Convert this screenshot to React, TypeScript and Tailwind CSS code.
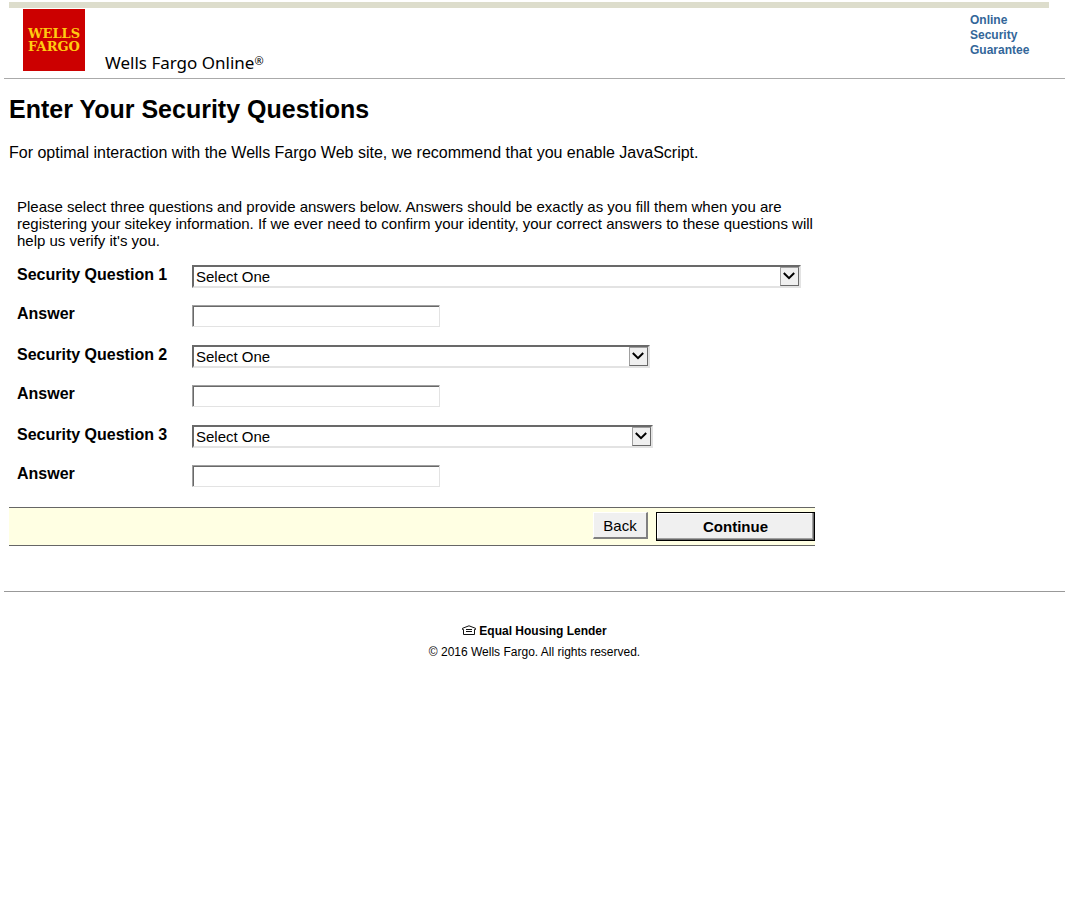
type Question = { id: string; label: string; width: string };

const questions: Question[] = [
  { id: "q1", label: "Security Question 1", width: "w-[609px]" },
  { id: "q2", label: "Security Question 2", width: "w-[458px]" },
  { id: "q3", label: "Security Question 3", width: "w-[461px]" },
];

function Logo() {
  return (
    <div className="flex size-[62px] flex-col items-center justify-center bg-[#cc0000] text-center font-['DejaVu_Serif',serif] text-[13px] font-bold leading-[13px] text-[#ffcc11]">
      <span>WELLS</span>
      <span>FARGO</span>
    </div>
  );
}

function HouseIcon() {
  return (
    <svg width="14" height="12" viewBox="0 0 14 12" fill="none" stroke="#111" aria-hidden="true">
      <path d="M0.5 4.5V3.3L7 0.8L13.5 3.3V4.5" />
      <path d="M0.5 4.5H1.5V9.5H12.5V4.5H13.5" />
      <path d="M4 4.5H10M4 6.5H10" />
    </svg>
  );
}

function QuestionSelect({ id, width }: { id: string; width: string }) {
  return (
    <div className={`relative max-w-full ${width}`}>
      <select
        id={id}
        className="block h-[23px] w-full appearance-none rounded-none border-2 border-b-[#e3e3e3] border-l-[#696969] border-r-[#e3e3e3] border-t-[#696969] bg-white pl-0.5 pr-6 text-[15px] leading-[19px] text-black"
      >
        <option>Select One</option>
      </select>
      <span className="pointer-events-none absolute bottom-0.5 right-0.5 top-0.5 flex w-[19px] items-center justify-center border border-b-[#696969] border-l-[#a0a0a0] border-r-[#696969] border-t-[#a0a0a0] bg-[#f0f0f0]">
        <svg width="13" height="9" viewBox="0 0 13 9" fill="none" stroke="#000" strokeWidth="2" aria-hidden="true">
          <path d="M0.8 1L6 6.2L11.2 1" />
        </svg>
      </span>
    </div>
  );
}

function QuestionRows({ id, label, width }: Question) {
  return (
    <>
      <div className="flex h-10 items-start">
        <label htmlFor={id} className="w-[175px] shrink-0 text-base font-bold leading-5">
          {label}
        </label>
        <QuestionSelect id={id} width={width} />
      </div>
      <div className="flex h-10 items-start">
        <label htmlFor={`${id}-answer`} className="w-[175px] shrink-0 text-base font-bold leading-[18px]">
          Answer
        </label>
        <input
          id={`${id}-answer`}
          type="text"
          className="h-[22px] w-[248px] border border-b-[#e3e3e3] border-l-[#a0a0a0] border-r-[#e3e3e3] border-t-[#a0a0a0] bg-white px-1 text-[15px] shadow-[inset_1px_1px_0_#696969]"
        />
      </div>
    </>
  );
}

export default function App() {
  return (
    <div className="bg-white px-1 pt-0.5 font-['Liberation_Sans',Arial,sans-serif] text-black">
      <header className="border-b border-[#aaaaaa]">
        <div className="ml-[5px] mr-4 h-1.5 bg-[#ddddcc]" />
        <div className="ml-[19px] mr-4 flex h-[70px] items-start pt-px">
          <Logo />
          <div className="ml-5 mt-[42px] flex items-start font-['Noto_Sans',sans-serif] text-[17px] leading-6">
            Wells Fargo Online<span className="text-[11px] leading-5">®</span>
          </div>
          <a
            href="#guarantee"
            className="ml-auto mt-1 w-[79px] text-xs font-bold leading-[15px] text-[#336699]"
          >
            Online
            <br />
            Security
            <br />
            Guarantee
          </a>
        </div>
      </header>

      <main className="pl-[5px] pt-[15px]">
        <h1 className="text-[25px] font-bold leading-[30px]">Enter Your Security Questions</h1>
        <p className="mt-5 text-base leading-[18px]">
          For optimal interaction with the Wells Fargo Web site, we recommend that you enable JavaScript.
        </p>

        <form className="mt-9 max-w-[806px]" onSubmit={(e) => e.preventDefault()}>
          <div className="pl-2">
            <p className="pb-4 text-[15px] leading-[17px]">
              Please select three questions and provide answers below. Answers should be exactly as you fill
              them when you are registering your sitekey information. If we ever need to confirm your
              identity, your correct answers to these questions will help us verify it's you.
            </p>
            {questions.map((q) => (
              <QuestionRows key={q.id} {...q} />
            ))}
          </div>
          <div className="mt-0.5 flex h-[39px] items-start justify-end gap-2 border-y border-[#666666] bg-[#ffffe3] pt-1">
            <button
              type="button"
              className="h-[27px] w-[55px] border-b-2 border-l border-r-2 border-t border-b-[#808080] border-l-white border-r-[#808080] border-t-white bg-[#f0f0f0] text-[15px] leading-[17px]"
            >
              Back
            </button>
            <button
              type="submit"
              className="h-[29px] w-[159px] border border-black bg-[#f0f0f0] text-[15px] font-bold leading-[17px] shadow-[inset_-1px_-1px_0_#696969,inset_-2px_-2px_0_#a0a0a0,inset_1px_1px_0_#ffffff]"
            >
              Continue
            </button>
          </div>
        </form>
      </main>

      <footer className="mt-[45px] border-t border-[#999999] pt-[31px] text-center text-xs">
        <p className="flex items-center justify-center gap-[3px] font-bold leading-4">
          <HouseIcon />
          Equal Housing Lender
        </p>
        <p className="mt-[5px] leading-4">© 2016 Wells Fargo. All rights reserved.</p>
      </footer>
    </div>
  );
}
